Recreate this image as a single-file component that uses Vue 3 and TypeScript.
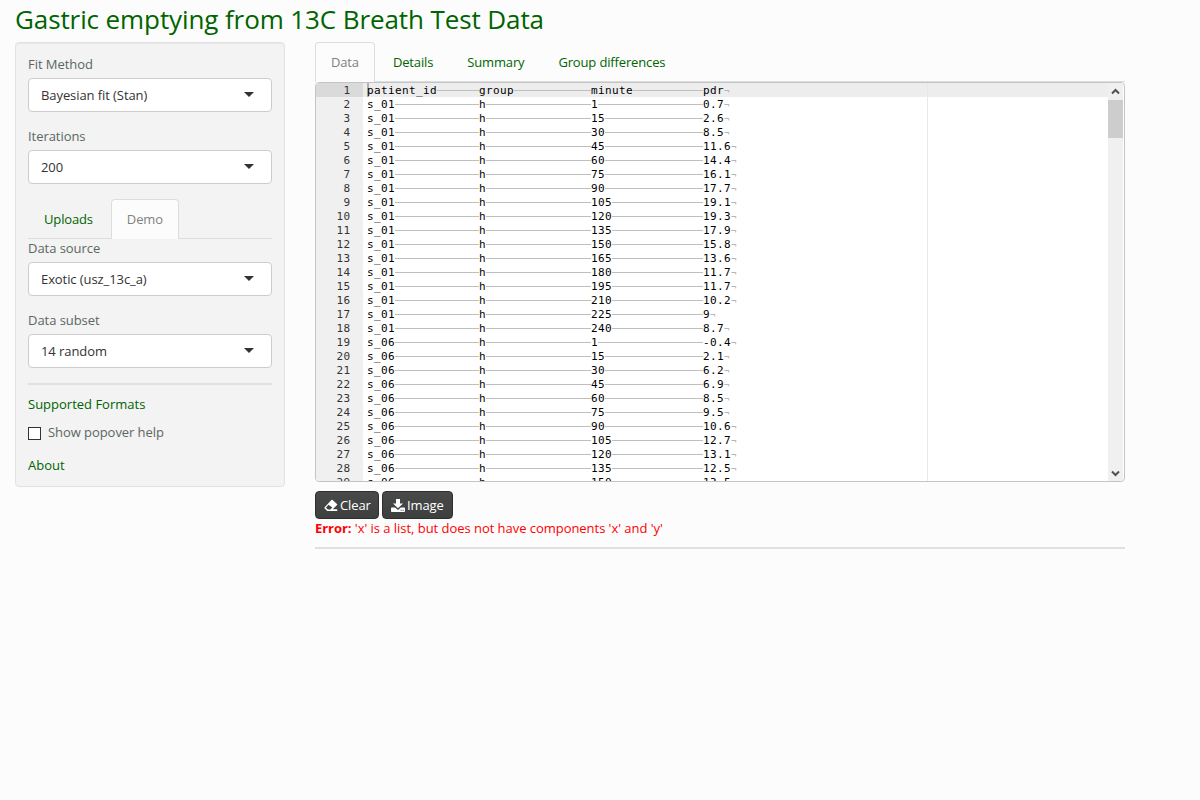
<script setup lang="ts">
interface Field { label: string; value: string }
const fitFields: Field[] = [
  { label: 'Fit Method', value: 'Bayesian fit (Stan)' },
  { label: 'Iterations', value: '200' },
]
const dataFields: Field[] = [
  { label: 'Data source', value: 'Exotic (usz_13c_a)' },
  { label: 'Data subset', value: '14 random' },
]
const tabs: string[] = ['Data', 'Details', 'Summary', 'Group differences']

const first: string[] = ['0.7', '2.6', '8.5', '11.6', '14.4', '16.1', '17.7', '19.1', '19.3', '17.9', '15.8', '13.6', '11.7', '11.7', '10.2', '9', '8.7']
const second: string[] = ['-0.4', '2.1', '6.2', '6.9', '8.5', '9.5', '10.6', '12.7', '13.1', '12.5', '13.5']
const toRows = (id: string, values: string[]): string[][] =>
  values.map((v, i) => [id, 'h', String(i === 0 ? 1 : i * 15), v])
const rows: string[][] = [
  ['patient_id', 'group', 'minute', 'pdr'],
  ...toRows('s_01', first),
  ...toRows('s_06', second),
]
</script>

<template>
  <div class="page">
    <h2>Gastric emptying from 13C Breath Test Data</h2>
    <div class="columns">
      <aside class="well">
        <div v-for="f in fitFields" :key="f.label" class="field">
          <label>{{ f.label }}</label>
          <div class="select"><span>{{ f.value }}</span><i class="caret"></i></div>
        </div>
        <ul class="nav small">
          <li>Uploads</li>
          <li class="active">Demo</li>
        </ul>
        <div v-for="f in dataFields" :key="f.label" class="field">
          <label>{{ f.label }}</label>
          <div class="select"><span>{{ f.value }}</span><i class="caret"></i></div>
        </div>
        <hr />
        <a class="formats">Supported Formats</a>
        <div class="check"><span class="box"></span><span>Show popover help</span></div>
        <a class="about">About</a>
      </aside>

      <main>
        <ul class="nav">
          <li v-for="(t, i) in tabs" :key="t" :class="{ active: i === 0 }">{{ t }}</li>
        </ul>
        <div class="editor">
          <div class="lines">
            <div v-for="(r, i) in rows" :key="i" class="line" :class="{ current: i === 0 }">
              <span class="num">{{ i + 1 }}</span>
              <span class="code">
                <span v-for="(c, j) in r" :key="j" class="cell"><span>{{ c }}</span><i v-if="j < 3" class="tab"></i><em v-else>¬</em></span>
              </span>
            </div>
            <span class="margin"></span>
            <span class="cursor"></span>
          </div>
          <div class="scroll">
            <svg width="9" height="7" viewBox="0 0 9 7"><path d="M1 5.5 4.5 2 8 5.5" /></svg>
            <span class="thumb"></span>
            <svg class="down" width="9" height="7" viewBox="0 0 9 7"><path d="M1 1.5 4.5 5 8 1.5" /></svg>
          </div>
        </div>
        <div class="buttons">
          <button class="clear">
            <svg width="14" height="13" viewBox="0 0 14 13"><path fill-rule="evenodd" d="M7.4 1.1Q8 .5 8.6 1.1L13 5Q13.5 5.5 13 6L8.8 10.3H13.2V12H3.3L.7 9.6Q0 8.9.7 8.2ZM4.5 5.8 1.9 8.8 4 10.5H6.4L8.3 8.6Z" /></svg>
            Clear
          </button>
          <button class="image">
            <svg width="14" height="13" viewBox="0 0 14 13"><path fill-rule="evenodd" d="M5 0H9V4.5H12L7 9.3 2 4.5H5ZM.8 8.5H4.1L7 11 9.9 8.5H13.2Q14 8.5 14 9.3V12.2Q14 13 13.2 13H.8Q0 13 0 12.2V9.3Q0 8.5.8 8.5ZM9.6 10.8V11.8H10.6V10.8ZM11.6 10.8V11.8H12.6V10.8Z" /></svg>
            Image
          </button>
        </div>
        <div class="error"><b>Error:</b> 'x' is a list, but does not have components 'x' and 'y'</div>
        <hr class="end" />
      </main>
    </div>
  </div>
</template>

<style>
body { background: #fcfcfc; }
</style>

<style scoped>
* { box-sizing: border-box; }
.page { width: 1140px; padding: 0 15px; font: 13px/18px "Open Sans", sans-serif; color: #5a6860; }
h2 { margin: 0; height: 42px; padding-top: 5px; font-size: 26px; line-height: 29px; font-weight: 400; letter-spacing: -.1px; color: #006400; white-space: nowrap; }
.columns { display: flex; gap: 30px; align-items: flex-start; }
.well { width: 270px; height: 445px; padding: 12px; background: #f3f3f3; border: 1px solid #e2e2e2; border-radius: 4px; box-shadow: inset 0 1px 1px rgba(0,0,0,.05); }
.field { height: 57px; margin-bottom: 15px; }
.field label { display: block; height: 23px; line-height: 18px; letter-spacing: -.05px; }
.select { height: 34px; display: flex; align-items: center; justify-content: space-between; padding: 0 17px 2px 12px; background: #fff; border: 1px solid #ccc; border-radius: 4px; color: #333; letter-spacing: -.08px; }
.select span { padding-top: 1px; }
.caret { border: 5px solid transparent; border-top-color: #333; border-bottom: 0; }
.nav { list-style: none; margin: 0; padding: 0; height: 40px; display: flex; gap: 2px; border-bottom: 1px solid #ddd; color: #006400; }
.nav li { height: 40px; padding: 10px 15px 0; border: 1px solid transparent; border-bottom: 0; line-height: 18px; letter-spacing: -.15px; }
.nav li.active { color: #808080; background: #fcfcfc; border-color: #ddd; border-radius: 4px 4px 0 0; }
hr { border: 0; margin: 0; height: 2px; background: #e0e0e0; }
a { display: block; color: #006400; }
.formats { margin-top: 10px; }
.check { display: flex; gap: 7px; margin-top: 10px; height: 18px; letter-spacing: -.06px; }
.box { width: 13px; height: 13px; margin-top: 4px; background: #fff; border: 1px solid #333; }
.about { margin-top: 15px; }
main { width: 810px; }
.editor { height: 400px; display: flex; overflow: hidden; background: #fff; border: 1px solid #c4c4c4; border-radius: 4px; }
.lines { position: relative; width: 792px; height: 398px; overflow: hidden; background: linear-gradient(to right, #f0f0f0 47px, #fff 47px); font: 11px/14px "DejaVu Sans Mono", monospace; letter-spacing: .377px; color: #000; }
.line { display: flex; height: 14px; }
.current { background: linear-gradient(to right, #dadada 47px, #ededed 47px); }
.num { width: 34.5px; padding-top: 1px; text-align: right; color: #333; }
.code { display: flex; margin-left: 16.5px; }
.cell { width: 112px; height: 15px; padding-top: 1px; display: flex; align-items: center; white-space: nowrap; }
.tab { flex: 1; height: 1px; margin-bottom: 1px; background: #bfbfbf; }
em { font-style: normal; font-size: 9px; line-height: 14px; color: #a8a8a8; }
.margin { position: absolute; left: 611px; top: 0; width: 1px; height: 100%; background: #e8e8e8; }
.cursor { position: absolute; left: 51px; top: 0; width: 2px; height: 14px; background: rgba(0,0,0,.25); }
.scroll { width: 15px; height: 398px; background: #f0f0f0; display: flex; flex-direction: column; align-items: center; padding: 5px 0 4px; }
.scroll svg { fill: none; stroke: #505050; stroke-width: 2; flex: none; }
.thumb { width: 15px; height: 38px; margin-top: 5px; background: #cdcdcd; }
.down { margin-top: auto; }
.buttons { display: flex; gap: 3px; margin-top: 9px; height: 28px; }
button { height: 28px; display: flex; align-items: center; gap: 2px; padding: 0 0 0 8px; font: 13px/18px "Open Sans", sans-serif; letter-spacing: -.1px; color: #fff; background: linear-gradient(#484a49, #3d403f); border: 1px solid #2e2f2f; border-radius: 4px; white-space: nowrap; }
.clear { width: 64px; }
.image { width: 71px; }
button svg { fill: #fff; flex: none; }
.error { color: #f00; height: 28px; letter-spacing: -.04px; }
</style>
